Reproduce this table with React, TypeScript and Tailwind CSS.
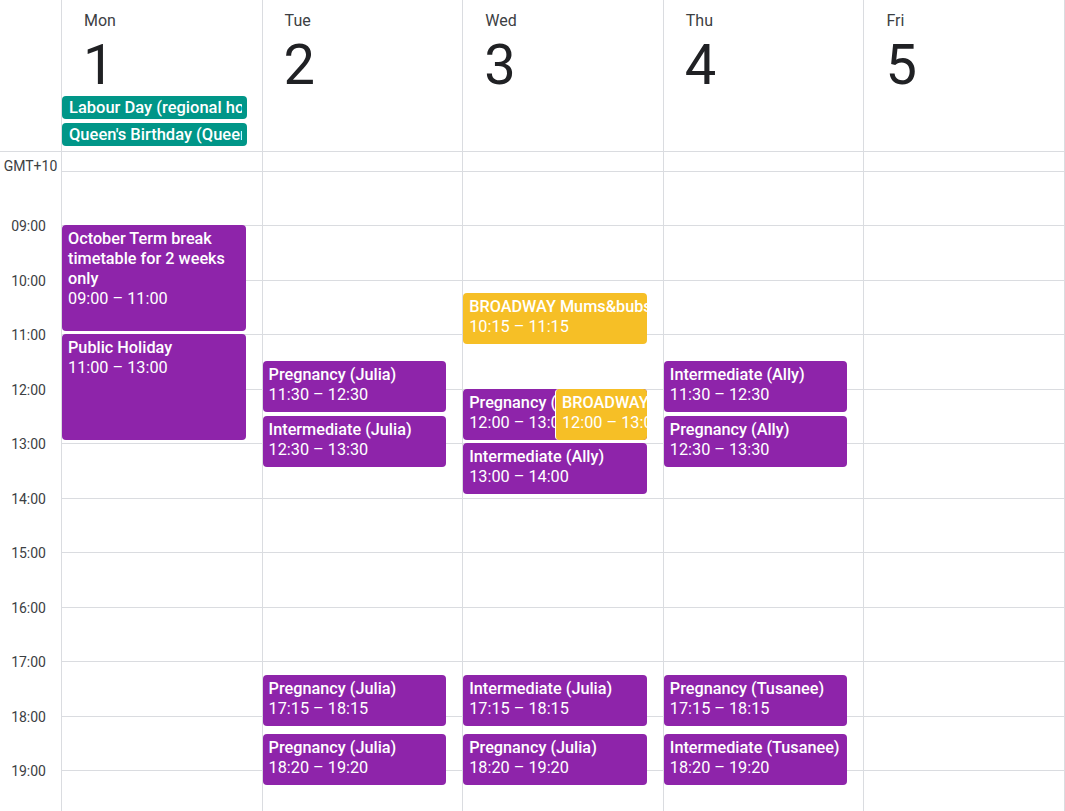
import React from 'react';

const HOUR = 54.5;
const OFFSET = 18.5; // space above the 08:00 line

const days = [
  { name: 'Mon', date: 1 },
  { name: 'Tue', date: 2 },
  { name: 'Wed', date: 3 },
  { name: 'Thu', date: 4 },
  { name: 'Fri', date: 5 },
];

const allDay = ['Labour Day (regional holiday)', "Queen's Birthday (Queensland)"];

type Ev = {
  title: string;
  start: number;
  end: number;
  label: string;
  color: 'purple' | 'yellow';
  half?: boolean;
};

const events: Ev[][] = [
  [
    { title: 'October Term break timetable for 2 weeks only', start: 9, end: 11, label: '09:00 – 11:00', color: 'purple' },
    { title: 'Public Holiday', start: 11, end: 13, label: '11:00 – 13:00', color: 'purple' },
  ],
  [
    { title: 'Pregnancy (Julia)', start: 11.5, end: 12.5, label: '11:30 – 12:30', color: 'purple' },
    { title: 'Intermediate (Julia)', start: 12.5, end: 13.5, label: '12:30 – 13:30', color: 'purple' },
    { title: 'Pregnancy (Julia)', start: 17.25, end: 18.25, label: '17:15 – 18:15', color: 'purple' },
    { title: 'Pregnancy (Julia)', start: 18 + 20 / 60, end: 19 + 20 / 60, label: '18:20 – 19:20', color: 'purple' },
  ],
  [
    { title: 'BROADWAY Mums&bubs', start: 10.25, end: 11.25, label: '10:15 – 11:15', color: 'yellow' },
    { title: 'Pregnancy (Ally)', start: 12, end: 13, label: '12:00 – 13:00', color: 'purple' },
    { title: 'BROADWAY Mums&bubs', start: 12, end: 13, label: '12:00 – 13:00', color: 'yellow', half: true },
    { title: 'Intermediate (Ally)', start: 13, end: 14, label: '13:00 – 14:00', color: 'purple' },
    { title: 'Intermediate (Julia)', start: 17.25, end: 18.25, label: '17:15 – 18:15', color: 'purple' },
    { title: 'Pregnancy (Julia)', start: 18 + 20 / 60, end: 19 + 20 / 60, label: '18:20 – 19:20', color: 'purple' },
  ],
  [
    { title: 'Intermediate (Ally)', start: 11.5, end: 12.5, label: '11:30 – 12:30', color: 'purple' },
    { title: 'Pregnancy (Ally)', start: 12.5, end: 13.5, label: '12:30 – 13:30', color: 'purple' },
    { title: 'Pregnancy (Tusanee)', start: 17.25, end: 18.25, label: '17:15 – 18:15', color: 'purple' },
    { title: 'Intermediate (Tusanee)', start: 18 + 20 / 60, end: 19 + 20 / 60, label: '18:20 – 19:20', color: 'purple' },
  ],
  [],
];

const hours = [8, 9, 10, 11, 12, 13, 14, 15, 16, 17, 18, 19];
const labels = ['09:00', '10:00', '11:00', '12:00', '13:00', '14:00', '15:00', '16:00', '17:00', '18:00', '19:00', '20:00'];

function EventBlock({ ev }: { ev: Ev }) {
  const top = OFFSET + (ev.start - 8) * HOUR;
  const height = (ev.end - ev.start) * HOUR - 3.5;
  const long = ev.end - ev.start >= 2;
  return (
    <div
      className={`absolute overflow-hidden rounded-[4px] pl-[6px] pt-[4px] text-[16.25px] leading-[20px] text-white ${
        ev.color === 'purple' ? 'bg-[#8e24aa]' : 'bg-[#f6bf26]'
      } ${ev.half ? 'left-[calc(50%-8px)] w-[calc(50%-8px)] border-l border-white pl-[5px]' : 'left-0 w-[calc(100%-16px)]'}`}
      style={{ top, height }}
    >
      <div className={`font-medium ${long ? '' : 'whitespace-nowrap'}`}>{ev.title}</div>
      <div className="whitespace-nowrap">{ev.label}</div>
    </div>
  );
}

export default function App() {
  return (
    <div className="h-[811px] w-full overflow-hidden bg-white font-['Roboto',sans-serif]">
      {/* Header */}
      <div className="grid grid-cols-[62px_repeat(5,minmax(0,1fr))] border-b border-[#dadce0]">
        <div className="border-r border-[#dadce0]" />
        {days.map((d, i) => (
          <div key={d.name} className="flex h-[151px] flex-col border-r border-[#dadce0] pt-[11px]">
            <div className="pl-[22px] text-[16px] leading-[20px] text-[#3c4043]">{d.name}</div>
            <div className="mt-[6px] pl-[21px] text-[56px] font-normal leading-[56px] text-[#202124]">{d.date}</div>
            {i === 0 && (
              <div className="mt-[3px] flex flex-col gap-[4px]">
                {allDay.map((t) => (
                  <div key={t} className="h-[23px] w-[calc(100%-15px)] rounded-[4px] bg-[#009688] pl-[7px] pr-[5px] text-[16.5px] font-medium leading-[23px] text-white">
                    <div className="overflow-hidden whitespace-nowrap">{t}</div>
                  </div>
                ))}
              </div>
            )}
          </div>
        ))}
      </div>

      {/* Body */}
      <div className="grid grid-cols-[62px_repeat(5,minmax(0,1fr))]">
        <div className="flex flex-col border-r border-[#dadce0] text-[14px] text-[#3c4043]">
          <div className="h-[24.5px] pt-[5px] text-center leading-[18px]">GMT+10</div>
          <div className="h-[21.25px]" />
          {labels.map((l) => (
            <div key={l} className="flex h-[54.5px] items-center justify-end pr-[15px] pt-[3px]">
              {l}
            </div>
          ))}
        </div>
        {days.map((d, i) => (
          <div key={d.name} className="relative border-r border-[#dadce0]">
            <div className="h-[18.5px]" />
            {hours.map((h) => (
              <div key={h} className="h-[54.5px] border-t border-[#dadce0]" />
            ))}
            {events[i].map((ev, j) => (
              <EventBlock key={j} ev={ev} />
            ))}
          </div>
        ))}
      </div>
    </div>
  );
}
